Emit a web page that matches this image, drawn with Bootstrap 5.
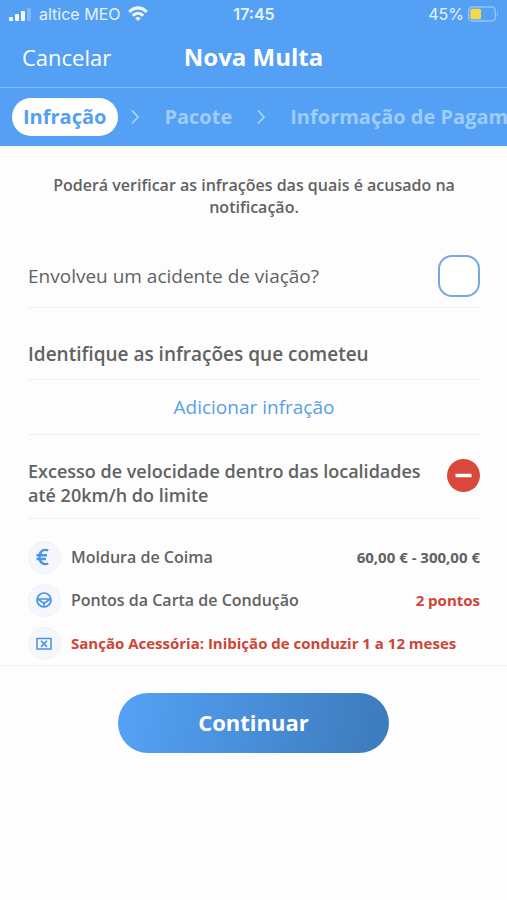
<!DOCTYPE html>
<html lang="pt">
<head>
<meta charset="utf-8">
<meta name="viewport" content="width=device-width, initial-scale=1">
<title>Nova Multa</title>
<link href="https://cdn.jsdelivr.net/npm/bootstrap@5.3.0/dist/css/bootstrap.min.css" rel="stylesheet">
<style>
:root { --sky: #54a0f4; --ink: #626262; --rule: #f0f0f2; --alert: #cf4436; }
body { font-family: "Open Sans", "Noto Sans", sans-serif; color: var(--ink); background: #fdfdfd; }
.app-head { background: var(--sky); color: #fff; }
.three { display: grid; grid-template-columns: 1fr auto 1fr; align-items: center; }
.status { height: 28px; padding: 0 8px 0 9px; font: 400 16px/28px Inter, sans-serif; color: #e4f2ff; }
.status .clock { font-weight: 600; }
.title-bar { height: 60px; padding: 0 22px 2px; border-bottom: 1px solid #86c0fa; }
.title-bar h1 { font-size: 24px; line-height: 32px; font-weight: 700; }
.cancel { font-size: 22px; line-height: 32px; font-weight: 500; }
.steps { height: 58px; padding-left: 12px; font-size: 20px; line-height: 38px; font-weight: 700; white-space: nowrap; }
.steps a { color: #9dcdfb; }
.steps a.current { background: #fff; color: var(--sky); padding: 0 12px 0 11px; border-radius: 19px; }
.steps svg { flex: none; margin: 0 22px; }
.steps .current + svg { margin: 0 22px 0 10px; }
.content { padding: 28px 27px 0 28px; }
.intro { font-size: 16px; line-height: 22px; font-weight: 600; padding: 0 20px; margin-bottom: 37px; }
.line { border-bottom: 1px solid var(--rule); }
.question { font-size: 19px; line-height: 28px; padding-bottom: 10px; }
.question .form-check-input { width: 42px; height: 42px; border: 2px solid #76a9e2; border-radius: 14px; background-color: #fff; }
.section-title { font-size: 19px; line-height: 28px; font-weight: 600; padding: 32px 0 11px; }
.add { font-size: 19px; line-height: 28px; padding: 13px 0; color: #579fe8; }
.offence { padding: 24px 0 11px; }
.offence h3 { font-size: 18px; line-height: 24px; font-weight: 600; }
.remove svg, .detail svg { display: block; flex: none; }
.details { padding: 22px 0 5px; display: grid; gap: 10px; }
.detail { font-size: 16px; line-height: 33px; font-weight: 600; display: flex; align-items: center; gap: 10px; }
.detail strong { font-size: 15px; font-weight: 700; }
.red { color: var(--alert); }
.footer-bar { border-top: 1px solid var(--rule); padding-top: 27px; }
.go { width: 53.3%; height: 60px; padding: 0 0 3px; border-radius: 30px; color: #fff; font-size: 22px; font-weight: 700; line-height: 32px; background: linear-gradient(100deg, #54a0f4 5%, #3d7cbd 95%); }
</style>
</head>
<body>
<header class="app-head overflow-hidden">
  <div class="status three">
    <div class="d-flex align-items-center">
      <svg class="me-2" width="22" height="13" viewBox="0 0 22 13" fill="#f3faff"><rect y="9" width="4" height="4" rx="1"/><rect x="6" y="6" width="4" height="7" rx="1"/><rect x="12" y="3" width="4" height="10" rx="1"/><rect x="18" width="4" height="13" rx="1" opacity=".25"/></svg>
      <span>altice MEO</span>
      <svg class="ms-2" width="20" height="16" viewBox="0 0 20 16" fill="none" stroke="#f3faff" stroke-width="3"><path d="M1.200 5.800Q10-2 18.800 5.800M4.800 9.600Q10 5 15.200 9.600"/><path d="M10 14.500 7.800 12.300Q10 10.400 12.200 12.300Z" fill="#f3faff" stroke-width="1"/></svg>
    </div>
    <span class="clock">17:45</span>
    <div class="d-flex align-items-center justify-content-end gap-1">
      <span>45%</span>
      <svg width="31" height="16" viewBox="0 0 32 16"><rect x=".75" y=".75" width="27.500" height="14.500" rx="4" fill="none" stroke="#91c7f8" stroke-width="1.500"/><rect x="2.500" y="2.500" width="11" height="11" rx="2" fill="#f6d64d"/><path d="M30 5.500q2 2.500 0 5z" fill="#91c7f8"/></svg>
    </div>
  </div>
  <div class="title-bar three">
    <button type="button" class="cancel btn btn-link p-0 border-0 text-white text-decoration-none text-start">Cancelar</button>
    <h1 class="m-0">Nova Multa</h1>
    <span></span>
  </div>
  <nav class="steps d-flex align-items-center" aria-label="Passos">
    <a href="#infracao" class="current text-decoration-none" aria-current="step">Infração</a>
    <svg width="14" height="16" viewBox="0 0 14 16" fill="none" stroke="#a9d4fc" stroke-width="1.700"><path d="m4 1.500 6 6.500-6 6.500"/></svg>
    <a href="#pacote" class="text-decoration-none">Pacote</a>
    <svg width="14" height="16" viewBox="0 0 14 16" fill="none" stroke="#a9d4fc" stroke-width="1.700"><path d="m4 1.500 6 6.500-6 6.500"/></svg>
    <a href="#pagamento" class="text-decoration-none">Informação de Pagamento</a>
  </nav>
</header>
<main>
  <div class="content">
    <p class="intro text-center">Poderá verificar as infrações das quais é acusado na notificação.</p>
    <div class="question line d-flex align-items-center justify-content-between">
      <label for="accident">Envolveu um acidente de viação?</label>
      <input class="form-check-input m-0 flex-shrink-0" type="checkbox" id="accident">
    </div>
    <h2 class="section-title line m-0">Identifique as infrações que cometeu</h2>
    <div class="line"><button type="button" class="add btn border-0 w-100">Adicionar infração</button></div>
    <div class="offence line d-flex align-items-start justify-content-between gap-3">
      <h3 class="m-0">Excesso de velocidade dentro das localidades até 20km/h do limite</h3>
      <button type="button" class="remove btn p-0 border-0 rounded-circle flex-shrink-0" aria-label="Remover infração"><svg width="33" height="33" viewBox="0 0 33 33"><circle cx="16.500" cy="16.500" r="16.500" fill="#d9483a"/><path d="M8.500 16.500h16" stroke="#fff" stroke-width="3.500"/></svg></button>
    </div>
    <div class="details">
      <div class="detail">
        <svg width="33" height="33" viewBox="0 0 33 33"><circle cx="16.500" cy="16.500" r="16" fill="#f5f7fc" stroke="#eef1f7"/><path d="M20.300 9.500C15 7.500 11.500 10.500 11.500 16S15 24.500 20.300 22.500M8.500 14.200h10.500M8.500 18h9.500" fill="none" stroke="#4a94e6" stroke-width="2.400"/></svg>
        <span class="flex-grow-1">Moldura de Coima</span><strong>60,00 € - 300,00 €</strong>
      </div>
      <div class="detail">
        <svg width="33" height="33" viewBox="0 0 33 33"><circle cx="16.500" cy="16.500" r="16" fill="#f5f7fc" stroke="#eef1f7"/><g fill="none" stroke="#4a94e6" stroke-width="1.700"><circle cx="16" cy="16" r="7"/><path d="M9.300 15H22.700M10.500 15.500 16 19.500 21.500 15.500M16 19v4"/></g></svg>
        <span class="flex-grow-1">Pontos da Carta de Condução</span><strong class="red">2 pontos</strong>
      </div>
      <div class="detail">
        <svg width="33" height="33" viewBox="0 0 33 33"><circle cx="16.500" cy="16.500" r="16" fill="#f5f7fc" stroke="#eef1f7"/><path d="M9 11.500h14v10.500H9ZM13 13.700l6 6.200M19 13.700l-6 6.200" fill="none" stroke="#4a94e6" stroke-width="1.600"/></svg>
        <strong class="red">Sanção Acessória: Inibição de conduzir 1 a 12 meses</strong>
      </div>
    </div>
  </div>
  <div class="footer-bar text-center"><button type="button" class="go btn border-0">Continuar</button></div>
</main>
<script src="https://cdn.jsdelivr.net/npm/bootstrap@5.3.0/dist/js/bootstrap.bundle.min.js"></script>
</body>
</html>
